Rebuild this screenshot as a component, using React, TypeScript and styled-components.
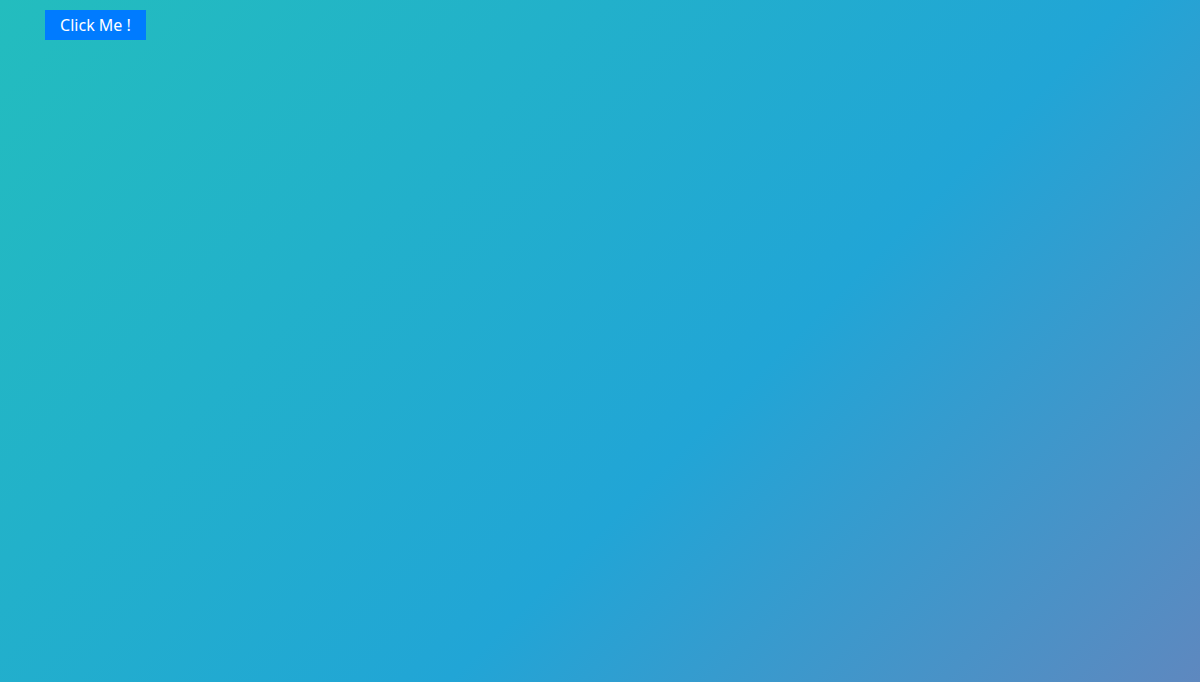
import * as React from "react"
import styled, { createGlobalStyle } from "styled-components"

const GlobalStyle = createGlobalStyle`
    html, body, #root {
        margin: 0;
        padding: 0;
        height: 100%;
    }
    body {
        font-family: "Noto Sans", "Open Sans", sans-serif;
    }
`

const Page = styled.main`
    box-sizing: border-box;
    min-height: 100vh;
    padding: 10px 45px;
    background: linear-gradient(135deg, #23bdbe 0%, #21a5d6 60%, #5e88bf 100%);
`

const Button = styled.button`
    display: flex;
    align-items: center;
    justify-content: center;
    width: 101px;
    height: 30px;
    padding: 0;
    border: none;
    border-radius: 0;
    background: #007bff;
    color: #fff;
    font-family: inherit;
    font-size: 16px;
    cursor: pointer;
`

const App: React.FC = () => (
    <>
        <GlobalStyle />
        <Page>
            <Button>Click Me !</Button>
        </Page>
    </>
)

export default App
